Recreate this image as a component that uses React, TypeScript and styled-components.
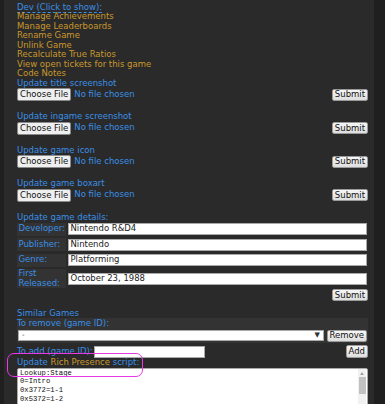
import * as React from "react"
import styled, { createGlobalStyle } from "styled-components"

const palette = {
  blue: "#3a8fe6",
  gold: "#c9982c",
  panel: "#2a2a2a",
  cell: "#333333",
  outer: "#1f1f1f",
  magenta: "#e838e8",
}

const GlobalStyle = createGlobalStyle`
  html, body {
    margin: 0;
    padding: 0;
    background: ${palette.outer};
  }
  body {
    font-family: "DejaVu Sans", Verdana, sans-serif;
    font-size: 8.5px;
  }
`

const Page = styled.div`
  width: 385px;
  height: 404px;
  overflow: hidden;
  padding-left: 4px;
  box-sizing: border-box;
  background: ${palette.outer};
`

const Panel = styled.div`
  width: 370px;
  height: 100%;
  background: ${palette.panel};
  padding: 2.5px 6px 0 13px;
  box-sizing: border-box;
  line-height: 9.5px;
`

const DevToggle = styled.div`
  color: ${palette.blue};
  span {
    border-bottom: 1px dashed ${palette.blue};
  }
`

const GoldLink = styled.div`
  color: ${palette.gold};
`

const Heading = styled.div<{ $gap?: number }>`
  color: ${palette.blue};
  margin-top: ${(p) => p.$gap ?? 0}px;
  position: relative;
`

const FileRow = styled.div`
  display: flex;
  align-items: center;
  justify-content: space-between;
  height: 13px;
`

const FilePicker = styled.div`
  display: flex;
  align-items: center;
  gap: 3px;
  color: ${palette.blue};
`

const NativeButton = styled.button<{ $h?: number }>`
  font-family: "DejaVu Sans", Verdana, sans-serif;
  font-size: 8.5px;
  line-height: 1;
  color: #111;
  height: ${(p) => p.$h ?? 12}px;
  padding: 0 2px;
  border: 1px solid #9a9a9a;
  border-radius: 2px;
  background: linear-gradient(#f6f6f6, #dedede);
  box-sizing: border-box;
  white-space: nowrap;
`

const ChooseButton = styled(NativeButton)`
  height: 13px;
  padding: 0 2px;
  border-color: #8a8a8a;
  background: #efefef;
`

const DetailsGrid = styled.div`
  display: grid;
  grid-template-columns: max-content 1fr;
  column-gap: 2px;
  row-gap: 2.5px;
  margin-top: 0.5px;
`

const LabelCell = styled.div<{ $h?: number }>`
  background: ${palette.cell};
  color: ${palette.blue};
  height: ${(p) => p.$h ?? 13}px;
  padding: 0 1px 0 1.5px;
  display: flex;
  align-items: center;
  line-height: 9.5px;
`

const InputCell = styled.div`
  display: flex;
  align-items: center;
`

const TextInput = styled.div<{ $w?: number }>`
  width: ${(p) => (p.$w ? `${p.$w}px` : "100%")};
  height: 12px;
  background: #fff;
  border: 1px solid #a9a9a9;
  box-sizing: border-box;
  color: #1a1a1a;
  padding-left: 1.5px;
  display: flex;
  align-items: center;
  margin-right: 1px;
`

const RightRow = styled.div<{ $gap?: number }>`
  display: flex;
  justify-content: flex-end;
  margin-top: ${(p) => p.$gap ?? 0}px;
`

const RemoveBox = styled.div`
  background: ${palette.cell};
  color: ${palette.blue};
  padding: 1.5px 1px 1.5px 0;
  margin-top: -1px;
`

const SelectRow = styled.div`
  display: flex;
  align-items: center;
  justify-content: space-between;
  margin-top: 1px;
`

const Select = styled.div`
  width: 306px;
  height: 11px;
  margin-left: 1px;
  background: #fff;
  border: 1px solid #a9a9a9;
  box-sizing: border-box;
  display: flex;
  align-items: center;
  justify-content: space-between;
  padding: 0 3px 0 3px;
  color: #333;
  font-size: 7px;
`

const AddRow = styled.div`
  display: flex;
  align-items: center;
  justify-content: space-between;
  margin-top: 2px;
  height: 13px;
`

const AddLabel = styled.div`
  display: flex;
  align-items: center;
  gap: 1px;
  color: ${palette.blue};
`

const Gold = styled.span`
  color: ${palette.gold};
`

const Annotation = styled.div`
  position: absolute;
  left: -10px;
  top: -5.5px;
  width: 136px;
  height: 24px;
  border: 1.5px solid ${palette.magenta};
  border-radius: 7px;
  box-sizing: border-box;
  pointer-events: none;
  z-index: 2;
`

const ScriptBox = styled.div`
  display: flex;
  height: 60px;
  background: #fff;
  border: 1px solid #a9a9a9;
  border-radius: 2px 2px 0 0;
  box-sizing: border-box;
`

const ScriptText = styled.pre`
  flex: 1;
  margin: 0;
  padding: 0 2px;
  font-family: "Liberation Mono", "DejaVu Sans Mono", monospace;
  font-size: 7.2px;
  line-height: 8.7px;
  color: #111;
`

const Scrollbar = styled.div`
  width: 8px;
  margin-right: 1px;
  background: #f1f1f1;
  display: flex;
  flex-direction: column;
  align-items: center;
  padding-top: 3px;
  gap: 2px;
`

const ScrollArrow = styled.div`
  width: 0;
  height: 0;
  border-left: 2px solid transparent;
  border-right: 2px solid transparent;
  border-bottom: 3px solid #a3a3a3;
`

const ScrollThumb = styled.div`
  width: 7px;
  height: 17px;
  background: #c1c1c1;
`

const devLinks = [
  "Manage Achievements",
  "Manage Leaderboards",
  "Rename Game",
  "Unlink Game",
  "Recalculate True Ratios",
  "View open tickets for this game",
  "Code Notes",
]

const uploads = [
  "Update title screenshot",
  "Update ingame screenshot",
  "Update game icon",
  "Update game boxart",
]

const details = [
  { label: "Developer:", value: "Nintendo R&D4" },
  { label: "Publisher:", value: "Nintendo" },
  { label: "Genre:", value: "Platforming" },
]

const script = ["Lookup:Stage", "0=Intro", "0x3772=1-1", "0x5372=1-2"]

const App: React.FC = () => {
  return (
    <>
      <GlobalStyle />
      <Page>
        <Panel>
          <DevToggle>
            <span>Dev (Click to show):</span>
          </DevToggle>
          {devLinks.map((l) => (
            <GoldLink key={l}>{l}</GoldLink>
          ))}

          {uploads.map((u, i) => (
            <React.Fragment key={u}>
              <Heading $gap={i === 0 ? 0 : 11}>{u}</Heading>
              <FileRow>
                <FilePicker>
                  <ChooseButton>Choose File</ChooseButton>
                  <span>No file chosen</span>
                </FilePicker>
                <NativeButton>Submit</NativeButton>
              </FileRow>
            </React.Fragment>
          ))}

          <Heading $gap={11}>Update game details:</Heading>
          <DetailsGrid>
            {details.map((d) => (
              <React.Fragment key={d.label}>
                <LabelCell>{d.label}</LabelCell>
                <InputCell>
                  <TextInput>{d.value}</TextInput>
                </InputCell>
              </React.Fragment>
            ))}
            <LabelCell $h={19}>
              First
              <br />
              Released:
            </LabelCell>
            <InputCell>
              <TextInput>October 23, 1988</TextInput>
            </InputCell>
          </DetailsGrid>
          <RightRow $gap={1}>
            <NativeButton>Submit</NativeButton>
          </RightRow>

          <Heading $gap={8}>Similar Games</Heading>
          <RemoveBox>
            <div>To remove (game ID):</div>
            <SelectRow>
              <Select>
                <span>-</span>
                <span>▼</span>
              </Select>
              <NativeButton>Remove</NativeButton>
            </SelectRow>
          </RemoveBox>
          <AddRow>
            <AddLabel>
              <span>To add (game ID):</span>
              <TextInput $w={111} />
            </AddLabel>
            <NativeButton $h={12.5}>Add</NativeButton>
          </AddRow>

          <Heading $gap={0}>
            Update <Gold>Rich Presence</Gold> script:
            <Annotation />
          </Heading>
          <ScriptBox>
            <ScriptText>{script.join("\n")}</ScriptText>
            <Scrollbar>
              <ScrollArrow />
              <ScrollThumb />
            </Scrollbar>
          </ScriptBox>
        </Panel>
      </Page>
    </>
  )
}

export default App
